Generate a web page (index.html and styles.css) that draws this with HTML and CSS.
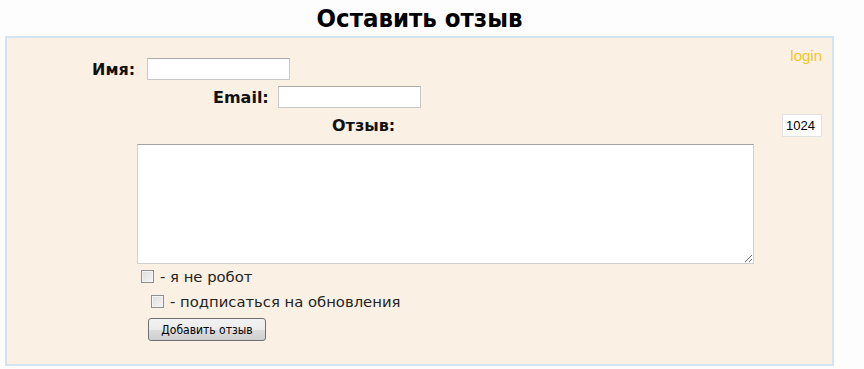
FILE: index.html
```html
<!DOCTYPE html>
<html lang="ru">

<head>
    <meta charset="UTF-8">
    <title>Оставить отзыв</title>
    <link rel="stylesheet" href="styles.css">
</head>

<body>

    <h1 class="title">Оставить отзыв</h1>

    <form class="review-box">
        <a class="login" href="#">login</a>

        <div class="row row-name">
            <label class="label" for="name">Имя:</label>
            <input class="field" type="text" id="name">
        </div>

        <div class="row row-email">
            <label class="label" for="email">Email:</label>
            <input class="field" type="text" id="email">
        </div>

        <div class="row row-text">
            <label class="label" for="text">Отзыв:</label>
            <input class="counter" type="text" value="1024" readonly>
        </div>

        <textarea class="message" id="text"></textarea>

        <label class="check check-robot">
            <input class="box" type="checkbox">
            <span>- я не робот</span>
        </label>
        <label class="check check-subscribe">
            <input class="box" type="checkbox">
            <span>- подписаться на обновления</span>
        </label>

        <button class="submit" type="button">Добавить отзыв</button>
    </form>

</body>

</html>
```

FILE: styles.css
```css
* {
    box-sizing: border-box;
}

html,
body {
    margin: 0;
    padding: 0;
    background: #fdfdfd;
}

body {
    padding: 0 30px 0 5px;
    font-family: "DejaVu Sans", sans-serif;
}

.title {
    margin: 0;
    height: 36px;
    line-height: 36px;
    text-align: center;
    font-size: 25.5px;
    font-stretch: condensed;
    font-weight: bold;
    color: #000;
}

.review-box {
    position: relative;
    width: 829px;
    height: 330px;
    border: 2px solid #d5e3f1;
    background: #faf0e3;
    padding-top: 20px;
    display: flex;
    flex-direction: column;
}

.login {
    position: absolute;
    top: 9px;
    right: 10px;
    font-family: "Liberation Sans", Arial, sans-serif;
    font-size: 15px;
    color: #f3c623;
    text-decoration: none;
}

.row {
    display: flex;
    align-items: center;
    height: 22px;
    margin-bottom: 6px;
}

.row-name {
    padding-left: 85px;
}

.row-name .label {
    margin-right: 12px;
}

.row-email {
    padding-left: 206px;
}

.row-text {
    padding-left: 325px;
    margin-bottom: 8px;
}

.label {
    font-family: "DejaVu Sans", sans-serif;
    font-weight: bold;
    font-size: 16px;
    color: #111;
    margin-right: 9px;
}

.field {
    width: 143px;
    height: 22px;
    border: 1px solid #c9c9c9;
    border-top-color: #a9a9a9;
    background: #fff;
    padding: 2px 4px;
}

.counter {
    margin-left: auto;
    margin-right: 10px;
    width: 40px;
    height: 23px;
    border: 1px solid #e2e2e2;
    background: #fff;
    padding: 0 3px;
    font-family: "Liberation Sans", Arial, sans-serif;
    font-size: 13px;
    color: #000;
}

.message {
    margin-left: 130px;
    width: 617px;
    height: 120px;
    border: 1px solid #cfcfcf;
    border-top-color: #a3a3a3;
    background: #fff;
    resize: vertical;
}

.check {
    display: flex;
    align-items: center;
    height: 25px;
    font-family: "DejaVu Sans", sans-serif;
    font-size: 14.8px;
    color: #222;
}

.check-robot {
    padding-left: 134px;
}

.check-subscribe {
    padding-left: 144px;
}

.box {
    appearance: none;
    -webkit-appearance: none;
    margin: 0 6px 0 0;
    width: 13px;
    height: 13px;
    border: 1px solid #8e8f8f;
    background: linear-gradient(135deg, #dcdcdc, #f6f6f6);
    box-shadow: inset 0 0 0 1px #f4f4f4;
}

.submit {
    align-self: flex-start;
    margin: 4px 0 0 141px;
    width: 118px;
    height: 23px;
    border: 1px solid #707070;
    border-radius: 3px;
    background: linear-gradient(#f2f2f2, #ebebeb 50%, #dddddd 50%, #cfcfcf);
    font-family: "DejaVu Sans", sans-serif;
    font-size: 12px;
    font-stretch: condensed;
    color: #000;
    padding: 0;
}
```
